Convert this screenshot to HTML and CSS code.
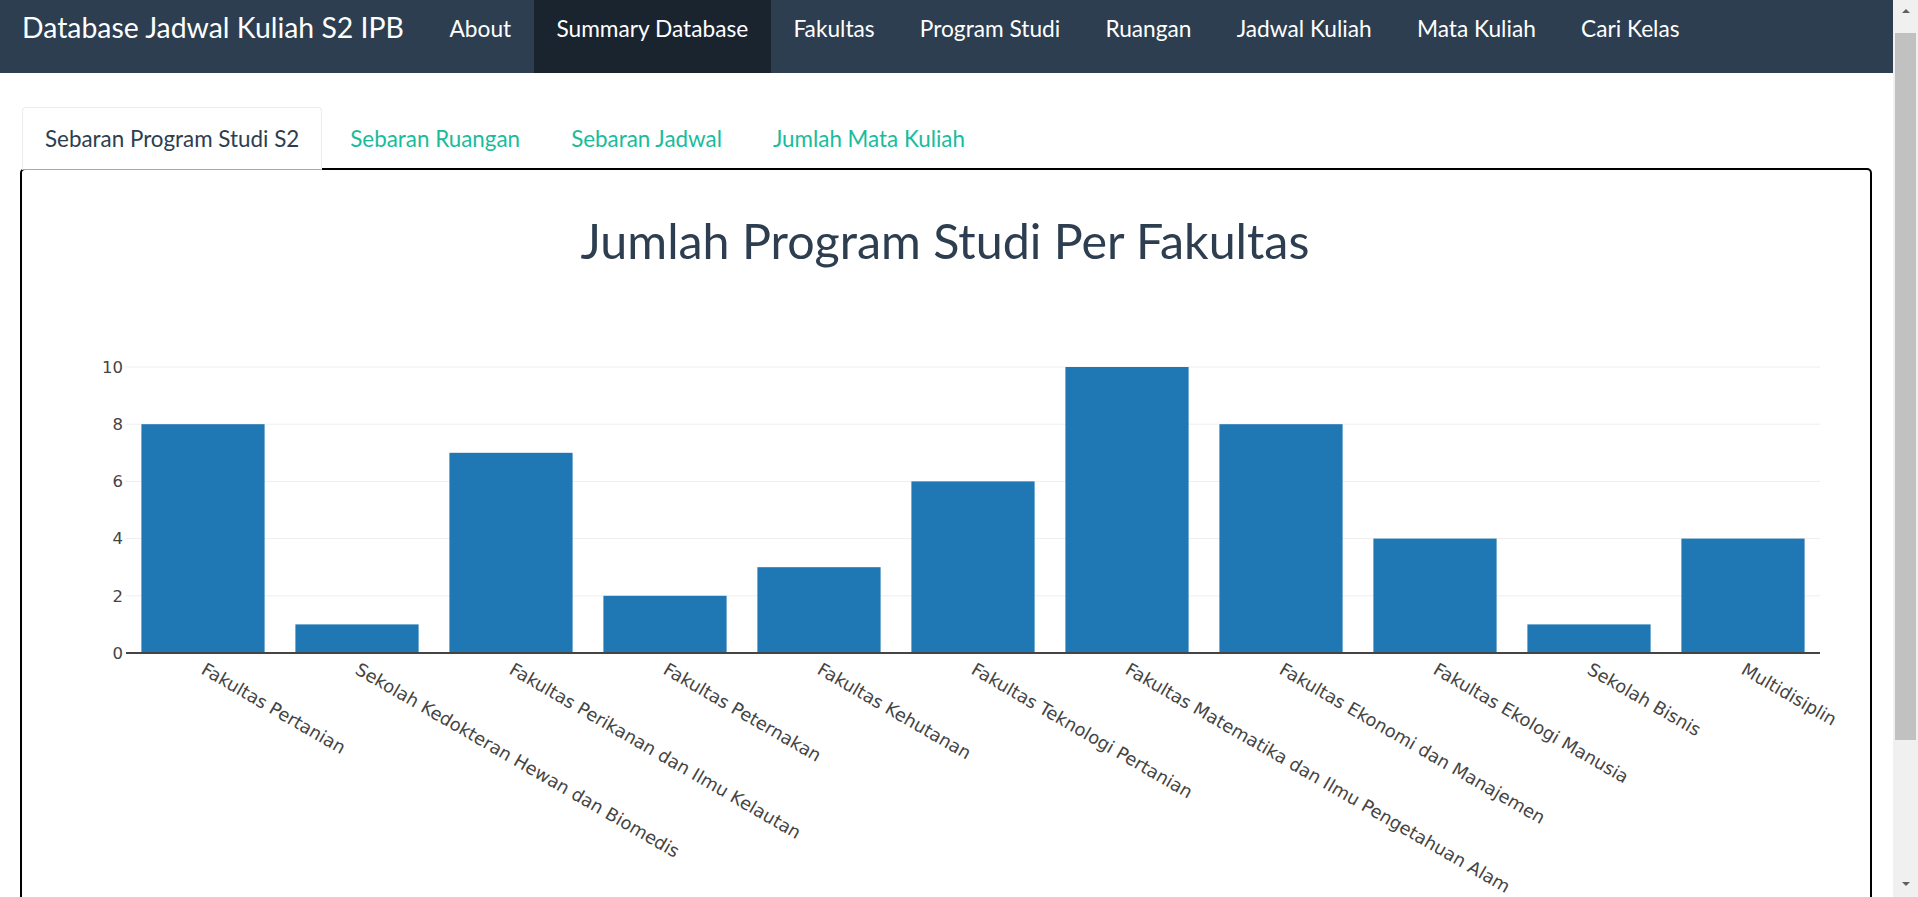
FILE: index.html
```html
<!DOCTYPE html>
<html lang="id">
<head>
<meta charset="utf-8">
<title>Database Jadwal Kuliah S2 IPB</title>
<link rel="stylesheet" href="styles.css">
</head>
<body>
<div class="page">
  <nav class="navbar">
    <a class="brand" href="#">Database Jadwal Kuliah S2 IPB</a>
    <ul class="nav">
      <li><a href="#">About</a></li>
      <li class="active"><a href="#">Summary Database</a></li>
      <li><a href="#">Fakultas</a></li>
      <li><a href="#">Program Studi</a></li>
      <li><a href="#">Ruangan</a></li>
      <li><a href="#">Jadwal Kuliah</a></li>
      <li><a href="#">Mata Kuliah</a></li>
      <li><a href="#">Cari Kelas</a></li>
    </ul>
  </nav>
  <main class="container">
    <ul class="tabs">
      <li class="active"><a href="#">Sebaran Program Studi S2</a></li>
      <li><a href="#">Sebaran Ruangan</a></li>
      <li><a href="#">Sebaran Jadwal</a></li>
      <li><a href="#">Jumlah Mata Kuliah</a></li>
    </ul>
    <section class="panel">
      <svg class="chart" width="1848" height="880" viewBox="0 0 1848 880" xmlns="http://www.w3.org/2000/svg">
        <text class="chart-title" x="923" y="89" text-anchor="middle">Jumlah Program Studi Per Fakultas</text>
        <g class="grid">
          <line x1="104" x2="1798" y1="425.8" y2="425.8"/>
          <line x1="104" x2="1798" y1="368.6" y2="368.6"/>
          <line x1="104" x2="1798" y1="311.4" y2="311.4"/>
          <line x1="104" x2="1798" y1="254.2" y2="254.2"/>
          <line x1="104" x2="1798" y1="197" y2="197"/>
        </g>
        <g class="bars">
          <rect x="119.4" y="254.2" width="123.2" height="228.8"/>
          <rect x="273.4" y="454.4" width="123.2" height="28.6"/>
          <rect x="427.4" y="282.8" width="123.2" height="200.2"/>
          <rect x="581.4" y="425.8" width="123.2" height="57.2"/>
          <rect x="735.4" y="397.2" width="123.2" height="85.8"/>
          <rect x="889.4" y="311.4" width="123.2" height="171.6"/>
          <rect x="1043.4" y="197" width="123.2" height="286"/>
          <rect x="1197.4" y="254.2" width="123.2" height="228.8"/>
          <rect x="1351.4" y="368.6" width="123.2" height="114.4"/>
          <rect x="1505.4" y="454.4" width="123.2" height="28.6"/>
          <rect x="1659.4" y="368.6" width="123.2" height="114.4"/>
        </g>
        <line class="zero" x1="104" x2="1798" y1="483" y2="483"/>
        <g class="ytick" text-anchor="end">
          <text x="101" y="488.8">0</text>
          <text x="101" y="431.6">2</text>
          <text x="101" y="374.4">4</text>
          <text x="101" y="317.2">6</text>
          <text x="101" y="260">8</text>
          <text x="101" y="202.8">10</text>
        </g>
        <g class="xtick">
          <text x="178" y="503" transform="rotate(30 178 503)">Fakultas Pertanian</text>
          <text x="332" y="503" transform="rotate(30 332 503)">Sekolah Kedokteran Hewan dan Biomedis</text>
          <text x="486" y="503" transform="rotate(30 486 503)">Fakultas Perikanan dan Ilmu Kelautan</text>
          <text x="640" y="503" transform="rotate(30 640 503)">Fakultas Peternakan</text>
          <text x="794" y="503" transform="rotate(30 794 503)">Fakultas Kehutanan</text>
          <text x="948" y="503" transform="rotate(30 948 503)">Fakultas Teknologi Pertanian</text>
          <text x="1102" y="503" transform="rotate(30 1102 503)">Fakultas Matematika dan Ilmu Pengetahuan Alam</text>
          <text x="1256" y="503" transform="rotate(30 1256 503)">Fakultas Ekonomi dan Manajemen</text>
          <text x="1410" y="503" transform="rotate(30 1410 503)">Fakultas Ekologi Manusia</text>
          <text x="1564" y="503" transform="rotate(30 1564 503)">Sekolah Bisnis</text>
          <text x="1718" y="503" transform="rotate(30 1718 503)">Multidisiplin</text>
        </g>
      </svg>
    </section>
  </main>
</div>
<div class="scrollbar" aria-hidden="true">
  <div class="sb-btn"><span class="arrow-up"></span></div>
  <div class="sb-thumb"></div>
  <div class="sb-btn sb-btn-bottom"><span class="arrow-down"></span></div>
</div>
</body>
</html>
```

FILE: styles.css
```css
html {
  background: #fff;
}
body {
  display: flex;
  height: 100vh;
  margin: 0;
  overflow: hidden;
  font-family: Lato, "Open Sans", "Liberation Sans", sans-serif;
  color: #2c3e50;
}
a {
  text-decoration: none;
}
.page {
  flex: 1 1 auto;
  min-width: 0;
  overflow: hidden;
}

/* scrollbar column */
.scrollbar {
  display: flex;
  flex-direction: column;
  flex: 0 0 25px;
  width: 25px;
  background: #f0f0f0;
}
.sb-btn {
  display: flex;
  align-items: center;
  justify-content: center;
  height: 22px;
}
.sb-btn-bottom {
  margin-top: auto;
  height: 20px;
  padding-bottom: 3px;
}
.arrow-up {
  width: 0;
  height: 0;
  border-left: 4px solid transparent;
  border-right: 4px solid transparent;
  border-bottom: 4px solid #606060;
}
.arrow-down {
  width: 0;
  height: 0;
  border-left: 4px solid transparent;
  border-right: 4px solid transparent;
  border-top: 4px solid #606060;
}
.sb-thumb {
  height: 707px;
  margin: 11px 2px 0;
  background: #c1c1c1;
}

/* navbar */
.navbar {
  display: flex;
  height: 73px;
  background: #2c3e50;
}
.brand {
  padding: 10px 23px 0 22px;
  font-size: 28.4px;
  line-height: 1.2;
  color: #fff;
  white-space: nowrap;
}
.nav {
  display: flex;
  margin: 0;
  padding: 0;
  list-style: none;
}
.nav a {
  display: block;
  box-sizing: border-box;
  height: 73px;
  padding: 14.5px 22.6px 0;
  font-size: 22.7px;
  line-height: 1.2;
  color: #fff;
  white-space: nowrap;
}
.nav .active a {
  background: #1a242f;
}

/* content */
.container {
  padding: 34px 21px 22px 20px;
}
.tabs {
  display: flex;
  margin: 0;
  padding: 0 0 0 2px;
  list-style: none;
}
.tabs li {
  position: relative;
  margin: 0 5px -2px 0;
}
.tabs a {
  display: block;
  padding: 18px 22px 17px;
  border: 1px solid transparent;
  border-radius: 4px 4px 0 0;
  font-size: 22.4px;
  line-height: 26px;
  color: #18bc9c;
  white-space: nowrap;
}
.tabs .active {
  z-index: 1;
}
.tabs .active a {
  background: #fff;
  border-color: #ececec #ececec #a8a8a8;
  color: #2c3e50;
}
.panel {
  border: 2px solid #000;
  border-radius: 5px;
}
.chart {
  display: block;
}
.chart-title {
  font-family: Lato, "Liberation Sans", sans-serif;
  font-size: 48.4px;
  fill: #2c3e50;
}
.grid line {
  stroke: #eeeeee;
  stroke-width: 1;
}
.bars rect {
  fill: #1f77b4;
}
.zero {
  stroke: #444;
  stroke-width: 2;
}
.ytick text,
.xtick text {
  font-family: Verdana, "DejaVu Sans", sans-serif;
  fill: #444;
}
.ytick text {
  font-size: 16.5px;
}
.xtick text {
  font-size: 17.8px;
}
```
